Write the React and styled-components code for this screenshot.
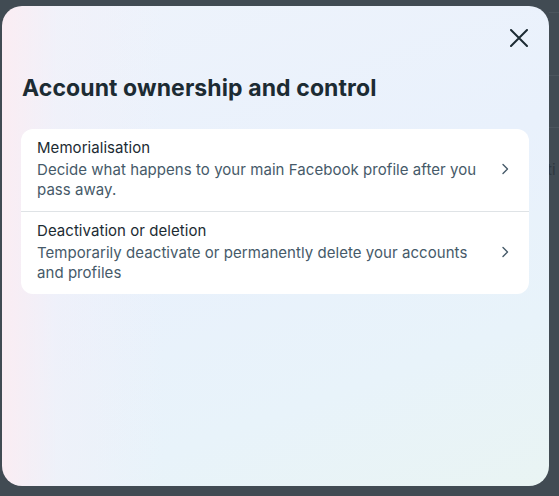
import React from 'react';
import styled, { createGlobalStyle } from 'styled-components';

const GlobalStyle = createGlobalStyle`
  html, body {
    margin: 0;
    padding: 0;
    background: #414b53;
    font-family: Inter, "Noto Sans", sans-serif;
    -webkit-font-smoothing: antialiased;
  }
`;

// the page behind the overlay: only a thin strip is visible on the right
const Page = styled.div`
  position: relative;
  width: 559px;
  height: 496px;
  box-sizing: border-box;
  padding: 6px 10px 10px 2px;
  display: flex;
  overflow: hidden;
  background:
    linear-gradient(#4b555d, #4b555d) right 0 top 12px / 10px 1px no-repeat,
    linear-gradient(#4b555d, #4b555d) right 0 top 75px / 10px 1px no-repeat,
    linear-gradient(#4b555d, #4b555d) right 0 top 127px / 10px 1px no-repeat,
    #414b53;
`;

const BehindText = styled.span`
  position: absolute;
  left: 547px;
  top: 160px;
  font-size: 15px;
  color: #2e373e;
`;

const Modal = styled.div`
  position: relative;
  z-index: 1;
  width: 547px;
  height: 480px;
  box-sizing: border-box;
  border-radius: 20px;
  padding: 14px 20px 20px 19px;
  display: flex;
  flex-direction: column;
  background:
    linear-gradient(90deg, rgba(252, 236, 242, 0.9) 0%, rgba(244, 240, 248, 0.5) 10%, rgba(236, 242, 252, 0) 30%),
    linear-gradient(160deg, #eef3fb 0%, #e9f1fc 45%, #e8f3fa 75%, #e9f4f3 100%);
`;

const Header = styled.div`
  display: flex;
  justify-content: flex-end;
  margin-right: -8px;
`;

const CloseButton = styled.button`
  width: 36px;
  height: 36px;
  border: none;
  background: transparent;
  padding: 0;
  display: flex;
  align-items: center;
  justify-content: center;
  cursor: pointer;
`;

const Title = styled.h1`
  margin: 18px 0 0 1px;
  font-size: 23px;
  font-weight: 700;
  line-height: 28px;
  color: #1c2b33;
  letter-spacing: 0.1px;
`;

const Card = styled.div`
  margin-top: 27px;
  background: #ffffff;
  border-radius: 12px;
  overflow: hidden;
`;

const Row = styled.div`
  display: flex;
  align-items: center;
  padding: 9px 16px 11px 16px;
  border-top: ${(p) => (p.first ? 'none' : '1px solid #dfe3e6')};
  min-height: 82px;
  box-sizing: border-box;
`;

const RowText = styled.div`
  flex: 1;
  display: flex;
  flex-direction: column;
  gap: 2px;
`;

const RowTitle = styled.div`
  font-size: 15px;
  line-height: 20px;
  color: #1c2b33;
  letter-spacing: 0.05px;
`;

const RowDesc = styled.div`
  font-size: 15px;
  line-height: 20px;
  color: #465a69;
  letter-spacing: 0.05px;
  max-width: 450px;
`;

const Chevron = styled.div`
  width: 24px;
  display: flex;
  justify-content: center;
  margin-left: 10px;
  margin-right: -4px;
`;

const items = [
  {
    title: 'Memorialisation',
    desc: 'Decide what happens to your main Facebook profile after you pass away.',
  },
  {
    title: 'Deactivation or deletion',
    desc: 'Temporarily deactivate or permanently delete your accounts and profiles',
  },
];

export default function App() {
  return (
    <Page>
      <GlobalStyle />
      <BehindText>ti</BehindText>
      <Modal>
        <Header>
          <CloseButton aria-label="Close">
            <svg width="18" height="18" viewBox="0 0 18 18">
              <path d="M1 1 L17 17 M17 1 L1 17" stroke="#1c2b33" strokeWidth="2" strokeLinecap="round" />
            </svg>
          </CloseButton>
        </Header>
        <Title>Account ownership and control</Title>
        <Card>
          {items.map((it, i) => (
            <Row key={it.title} first={i === 0}>
              <RowText>
                <RowTitle>{it.title}</RowTitle>
                <RowDesc>{it.desc}</RowDesc>
              </RowText>
              <Chevron>
                <svg width="10" height="14" viewBox="0 0 10 14">
                  <path d="M3 2.5 L7.5 7 L3 11.5" fill="none" stroke="#465a69" strokeWidth="1.4" strokeLinecap="round" strokeLinejoin="round" />
                </svg>
              </Chevron>
            </Row>
          ))}
        </Card>
      </Modal>
    </Page>
  );
}
